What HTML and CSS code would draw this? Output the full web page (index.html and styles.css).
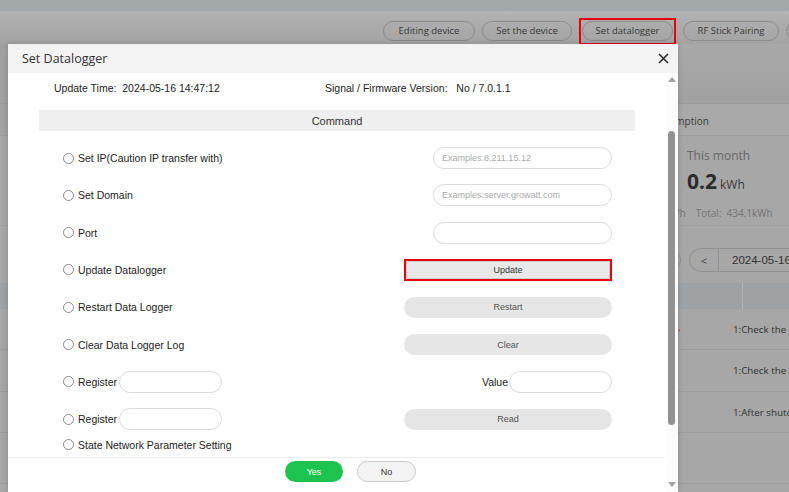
FILE: index.html
```html
<!DOCTYPE html>
<html>
<head>
<meta charset="utf-8">
<title>Set Datalogger</title>
<link rel="stylesheet" href="styles.css">
</head>
<body>
<div class="page">
  <div class="topstrip"></div>
  <div class="toolbar">
    <button class="tbtn w92">Editing device</button>
    <button class="tbtn w90">Set the device</button>
    <span class="hl"><button class="tbtn w91">Set datalogger</button></span>
    <button class="tbtn w96">RF Stick Pairing</button>
    <button class="tbtn w92">Delete</button>
  </div>
  <div class="band banda"><div class="lc"></div><div class="rc"></div></div>
  <div class="band tabs"><div class="lc"></div><div class="rc"><span class="tabtxt">Consumption</span></div></div>
  <div class="band summary">
    <div class="lc"></div>
    <div class="rc sumcol">
      <div class="sumtitle">This month</div>
      <div class="sumval"><b>0.2</b><span class="unit">kWh</span></div>
      <div class="sumtot"><span class="prevunit">kWh</span><span class="tot">Total:&nbsp;&nbsp;434.1kWh</span></div>
    </div>
  </div>
  <div class="band datebar">
    <div class="lc"></div>
    <div class="rc datecol">
      <span class="prevpill"></span>
      <div class="dgroup"><span class="dprev">&lt;</span><span class="dval">2024-05-16</span></div>
    </div>
  </div>
  <div class="band thead"><div class="lc"></div><div class="rc"><span class="thc"></span><span class="thc2"></span></div></div>
  <div class="band trow"><div class="lc"></div><div class="rc"><span class="reddot">.</span><span class="tcell">1:Check the fan</span></div></div>
  <div class="band trow r2"><div class="lc"></div><div class="rc"><span class="tcell">1:Check the AC</span></div></div>
  <div class="band trow"><div class="lc"></div><div class="rc"><span class="tcell">1:After shutdown</span></div></div>
  <div class="band trow last"><div class="lc"></div><div class="rc"></div></div>
</div>

<div class="modal">
  <div class="mhead">
    <span class="mtitle">Set Datalogger</span>
    <button class="close" aria-label="close"><svg width="11" height="11" viewBox="0 0 11 11"><path d="M1 1L10 10M10 1L1 10" stroke="#2b2b2b" stroke-width="1.6" fill="none"/></svg></button>
  </div>
  <div class="mbody">
    <div class="mcontent">
      <div class="scrollarea">
        <div class="info">
          <span class="upd">Update Time:&nbsp;&nbsp;2024-05-16 14:47:12</span>
          <span class="sig">Signal / Firmware Version:&nbsp;&nbsp;&nbsp;No / 7.0.1.1</span>
        </div>
        <div class="cmd">Command</div>
        <div class="rows">
          <div class="row">
            <label class="opt"><span class="radio"></span>Set IP(Caution IP transfer with)</label>
            <input class="field" placeholder="Examples:8.211.15.12">
          </div>
          <div class="row">
            <label class="opt"><span class="radio"></span>Set Domain</label>
            <input class="field" placeholder="Examples:server.growatt.com">
          </div>
          <div class="row">
            <label class="opt"><span class="radio"></span>Port</label>
            <input class="field">
          </div>
          <div class="row">
            <label class="opt"><span class="radio"></span>Update Datalogger</label>
            <button class="act marked">Update</button>
          </div>
          <div class="row">
            <label class="opt"><span class="radio"></span>Restart Data Logger</label>
            <button class="act">Restart</button>
          </div>
          <div class="row">
            <label class="opt"><span class="radio"></span>Clear Data Logger Log</label>
            <button class="act">Clear</button>
          </div>
          <div class="row">
            <label class="opt"><span class="radio"></span>Register<input class="small"></label>
            <label class="vlabel">Value<input class="small"></label>
          </div>
          <div class="row">
            <label class="opt"><span class="radio"></span>Register<input class="small"></label>
            <button class="act">Read</button>
          </div>
          <div class="row short">
            <label class="opt"><span class="radio"></span>State Network Parameter Setting</label>
          </div>
        </div>
      </div>
      <div class="footer">
        <button class="yes">Yes</button>
        <button class="no">No</button>
      </div>
    </div>
    <div class="scrollbar">
      <span class="arr up"></span>
      <div class="track"><div class="thumb"></div></div>
      <span class="arr down"></span>
    </div>
  </div>
</div>
</body>
</html>
```

FILE: styles.css
```css
* { box-sizing: border-box; }
html, body { margin: 0; padding: 0; }
body {
  width: 789px;
  height: 492px;
  overflow: hidden;
  position: relative;
  background: #a7a7a7;
  font-family: "Open Sans", "Liberation Sans", Arial, sans-serif;
}

/* ---------- background page (dimmed) ---------- */
.page { display: flex; flex-direction: column; }
.topstrip {
  height: 12px;
  background: #a2a7aa;
  border-bottom: 1px solid #aeb2b4;
}
.toolbar {
  height: 32px;
  background: linear-gradient(#b1b1b1, #a4a4a4);
  display: flex;
  align-items: center;
  gap: 7px;
  padding: 6px 0 0 383px;
  white-space: nowrap;
  overflow: hidden;
}
.tbtn {
  flex: none;
  height: 20px;
  padding: 0;
  border: 1px solid #8b8b8b;
  border-radius: 10px;
  background: transparent;
  font: 9.5px "Open Sans", sans-serif;
  color: #383838;
  line-height: 18px;
  text-align: center;
}
.w90 { width: 90px; }
.w91 { width: 91px; }
.w92 { width: 92px; }
.w96 { width: 96px; }
.hl {
  flex: none;
  display: flex;
  border: 2px solid #e60012;
  padding: 1px 1px 2px;
}

.band { display: flex; }
.lc { width: 678px; flex: none; }
.rc { flex: 1; overflow: hidden; display: flex; align-items: center; white-space: nowrap; }

.banda { height: 59px; }
.banda .lc { background: #a0a0a0; }
.banda .rc { background: linear-gradient(#a9a9a9, #a1a1a1); }

.tabs { height: 33px; border-top: 1px solid #9a9a9a; border-bottom: 1px solid #9c9c9c; }
.tabs .lc { background: #a2a2a2; }
.tabs .rc { background: #a9a9a9; padding-top: 3px; }
.tabtxt { margin-left: -32px; font-size: 10px; color: #3a3a3a; }

.summary { height: 90px; border-bottom: 1px solid #9f9f9f; }
.sumcol { flex-direction: column; align-items: flex-start; padding: 12px 0 0 9px; }
.sumtitle { font-size: 12px; line-height: 16px; color: #676767; }
.sumval { margin-top: 5px; line-height: 24px; display: flex; align-items: baseline; }
.sumval b { font-size: 21px; font-weight: 700; color: #2c2c2c; }
.unit { font-size: 12px; color: #3a3a3a; margin-left: 3px; }
.sumtot { margin-top: 9px; font-size: 10px; line-height: 14px; color: #747474; display: flex; margin-left: -22px; }
.prevunit { margin-right: 10px; }

.datebar { height: 57px; }
.datecol { align-items: flex-start; padding-top: 22px; }
.prevpill {
  flex: none;
  width: 20px;
  height: 24px;
  margin-left: -17px;
  border: 1px solid #8f8f8f;
  border-radius: 0 12px 12px 0;
}
.dgroup {
  flex: none;
  margin-left: 8px;
  width: 140px;
  height: 24px;
  border: 1px solid #8f8f8f;
  border-radius: 12px;
  display: flex;
  align-items: center;
}
.dprev {
  width: 29px;
  height: 100%;
  border-right: 1px solid #8f8f8f;
  display: flex;
  align-items: center;
  justify-content: center;
  font-size: 11px;
  color: #444;
}
.dval { margin-left: 13px; font: 11.5px "Liberation Sans", Arial, sans-serif; color: #333; }

.thead { height: 26px; background: #9ea2a5; }
.thead .rc { align-items: stretch; }
.thc { width: 65px; border-right: 1px solid #b1b4b6; }

.trow { height: 41px; border-bottom: 1px solid #9d9d9d; }
.trow.r2 { height: 42px; }
.trow.last { height: 51px; }
.reddot { color: #c00000; font-size: 11px; width: 55px; flex: none; margin-top: -6px; }
.tcell { font-size: 9.8px; color: #303030; }
.trow .tcell:first-child { margin-left: 55px; }

/* ---------- modal ---------- */
.modal {
  position: absolute;
  left: 8px;
  top: 44px;
  width: 670px;
  height: 448px;
  background: #fff;
  box-shadow: 0 0 6px rgba(0, 0, 0, 0.18);
  display: flex;
  flex-direction: column;
  font-family: "Liberation Sans", Arial, sans-serif;
  color: #2a2a2a;
}
.mhead {
  height: 29px;
  flex: none;
  background: #f3f3f3;
  display: flex;
  align-items: center;
  justify-content: space-between;
  padding: 0 9px 0 14px;
}
.mtitle { font: 12.5px "Open Sans", sans-serif; color: #333; }
.close {
  border: 0;
  background: none;
  padding: 0;
  width: 11px;
  height: 11px;
  display: flex;
}
.mbody { flex: 1; display: flex; min-height: 0; }
.mcontent { flex: 1; display: flex; flex-direction: column; min-width: 0; }
.scrollarea { height: 384px; flex: none; overflow: hidden; }

.info {
  height: 30px;
  display: flex;
  align-items: center;
  padding-left: 46px;
  font-size: 10.5px;
  color: #222;
  white-space: nowrap;
}
.upd { width: 271px; flex: none; }

.cmd {
  margin: 7px 31px 0;
  height: 21px;
  background: #efefef;
  display: flex;
  align-items: center;
  justify-content: center;
  font-size: 11px;
  color: #333;
}

.rows { padding: 8.35px 54px 0 55px; }
.row {
  height: 37.33px;
  display: flex;
  align-items: center;
  justify-content: space-between;
}
.row.short { height: 14px; }
.opt, .vlabel {
  display: flex;
  align-items: center;
  font-size: 10.5px;
  color: #222;
  white-space: nowrap;
}
.radio {
  width: 11px;
  height: 11px;
  border: 1px solid #8a8a8a;
  border-radius: 50%;
  background: #fff;
  margin-right: 4px;
  flex: none;
}
.field {
  width: 179px;
  height: 22px;
  border: 1px solid #dcdcdc;
  border-radius: 11px;
  padding: 0 8px;
  font: 9px "Liberation Sans", Arial, sans-serif;
  color: #333;
  outline: none;
}
.field::placeholder { color: #a9a9a9; }
.small {
  width: 103px;
  height: 22px;
  border: 1px solid #dcdcdc;
  border-radius: 11px;
  margin-left: 2px;
  outline: none;
}
.vlabel .small { margin-left: 1px; }
.act {
  width: 208px;
  height: 21px;
  border: 0;
  border-radius: 11px;
  background: #e6e6e6;
  font: 9px "Liberation Sans", Arial, sans-serif;
  color: #555;
  padding: 0;
}
.act.marked {
  border-radius: 0;
  border: 2px solid #e60012;
  background: #e8e8e8;
  box-shadow: inset 0 0 0 1px #cfcfcf;
  color: #333;
  height: 22px;
}

.footer {
  flex: 1;
  border-top: 1px solid #ececec;
  margin-right: 1px;
  display: flex;
  align-items: flex-start;
  gap: 14px;
  padding: 3px 0 0 277px;
}
.yes, .no {
  width: 58px;
  height: 21px;
  border-radius: 11px;
  font: 9px "Liberation Sans", Arial, sans-serif;
  padding: 0;
}
.yes { border: 0; background: #1ec34f; color: #fff; }
.no { width: 59px; border: 1px solid #c9c9c9; background: #f3f3f3; color: #333; }

.scrollbar {
  width: 12px;
  flex: none;
  display: flex;
  flex-direction: column;
  align-items: center;
  background: #fcfcfc;
}
.arr { width: 12px; height: 12px; flex: none; display: flex; align-items: center; justify-content: center; }
.arr::before {
  content: "";
  border-left: 4px solid transparent;
  border-right: 4px solid transparent;
}
.arr.up::before { border-bottom: 5px solid #a0a0a0; }
.arr.down { margin-bottom: 2px; }
.arr.down::before { border-top: 5px solid #a0a0a0; }
.track { flex: 1; width: 12px; padding-left: 2px; padding-top: 46px; }
.thumb { width: 7px; height: 294px; background: #929292; border-radius: 4px; }
```
